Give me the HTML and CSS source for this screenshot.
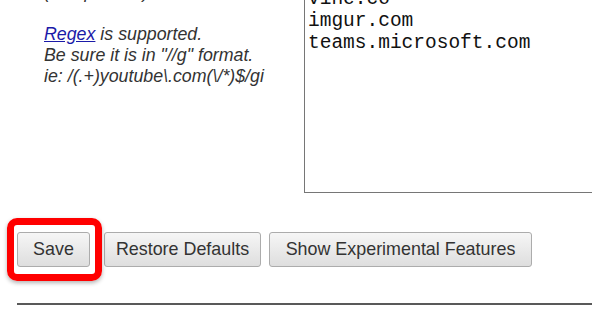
FILE: index.html
```html
<!DOCTYPE html>
<html lang="en">
<head>
    <meta charset="UTF-8">
    <title>Options</title>
<link rel="stylesheet" href="styles.css">
</head>
<body>
    <div class="page">
        <div class="option-row">
            <div class="desc">
                (one per line)<br><br>
                <a href="#" class="link">Regex</a> is supported.<br>
                Be sure it is in "//g" format.<br>
                ie: /(.+)youtube\.com(\/*)$/gi
            </div>
            <textarea class="sites" spellcheck="false">youtube.com
vine.co
imgur.com
teams.microsoft.com</textarea>
        </div>

        <div class="actions">
            <span class="highlight-wrap">
                <button class="btn btn-save">Save</button>
                <span class="highlight"></span>
            </span>
            <button class="btn btn-restore">Restore Defaults</button>
            <button class="btn btn-experimental">Show Experimental Features</button>
        </div>

        <hr class="divider">
    </div>
</body>
</html>
```

FILE: styles.css
```css
/* Global */
* {
    margin: 0;
    padding: 0;
    box-sizing: border-box;
}

html, body {
    height: 100%;
    overflow: hidden;
    background: #ffffff;
}

body {
    font-family: "Liberation Sans", Arial, sans-serif;
    color: #333333;
}

/* page is scrolled a little, top is cut off */
.page {
    margin-top: -37px;
    padding-left: 17px;
    width: 900px;
}

/* Sites option */
.option-row {
    display: flex;
    align-items: flex-start;
}

.desc {
    width: 287px;
    padding: 19px 0 0 27px;
    font-size: 17.8px;
    font-style: italic;
    line-height: 21px;
    color: #333333;
}

.link {
    color: #1a1aa8;
    text-decoration: underline;
}

.sites {
    width: 420px;
    height: 230px;
    padding: 2px 3px;
    border: 1px solid #767676;
    font-family: "Liberation Mono", "Courier New", monospace;
    font-size: 19.5px;
    line-height: 22px;
    color: #111111;
    resize: none;
    overflow: hidden;
    outline: none;
}

/* Buttons */
.actions {
    display: flex;
    align-items: center;
    margin-top: 39px;
}

.btn {
    height: 35px;
    padding: 0;
    margin-right: 8px;
    font-family: "Liberation Sans", Arial, sans-serif;
    font-size: 17.9px;
    color: #333333;
    white-space: nowrap;
    text-align: center;
    background: linear-gradient(#f6f6f6, #dedede);
    border: 1px solid #acacac;
    border-radius: 3px;
    cursor: pointer;
}

.btn-save {
    width: 73px;
    margin-right: 0;
}

.btn-restore {
    width: 157px;
}

.btn-experimental {
    width: 263px;
}

.highlight-wrap {
    position: relative;
    display: inline-flex;
    margin-right: 14px;
}

.highlight {
    position: absolute;
    top: -14px;
    bottom: -14px;
    left: -10px;
    right: -12px;
    border: 7px solid #ff0000;
    border-radius: 10px;
    box-shadow: 0 2px 4px rgba(0, 0, 0, 0.3);
    pointer-events: none;
}

.divider {
    margin-top: 36px;
    border: none;
    border-top: 2px solid #595959;
}
```
